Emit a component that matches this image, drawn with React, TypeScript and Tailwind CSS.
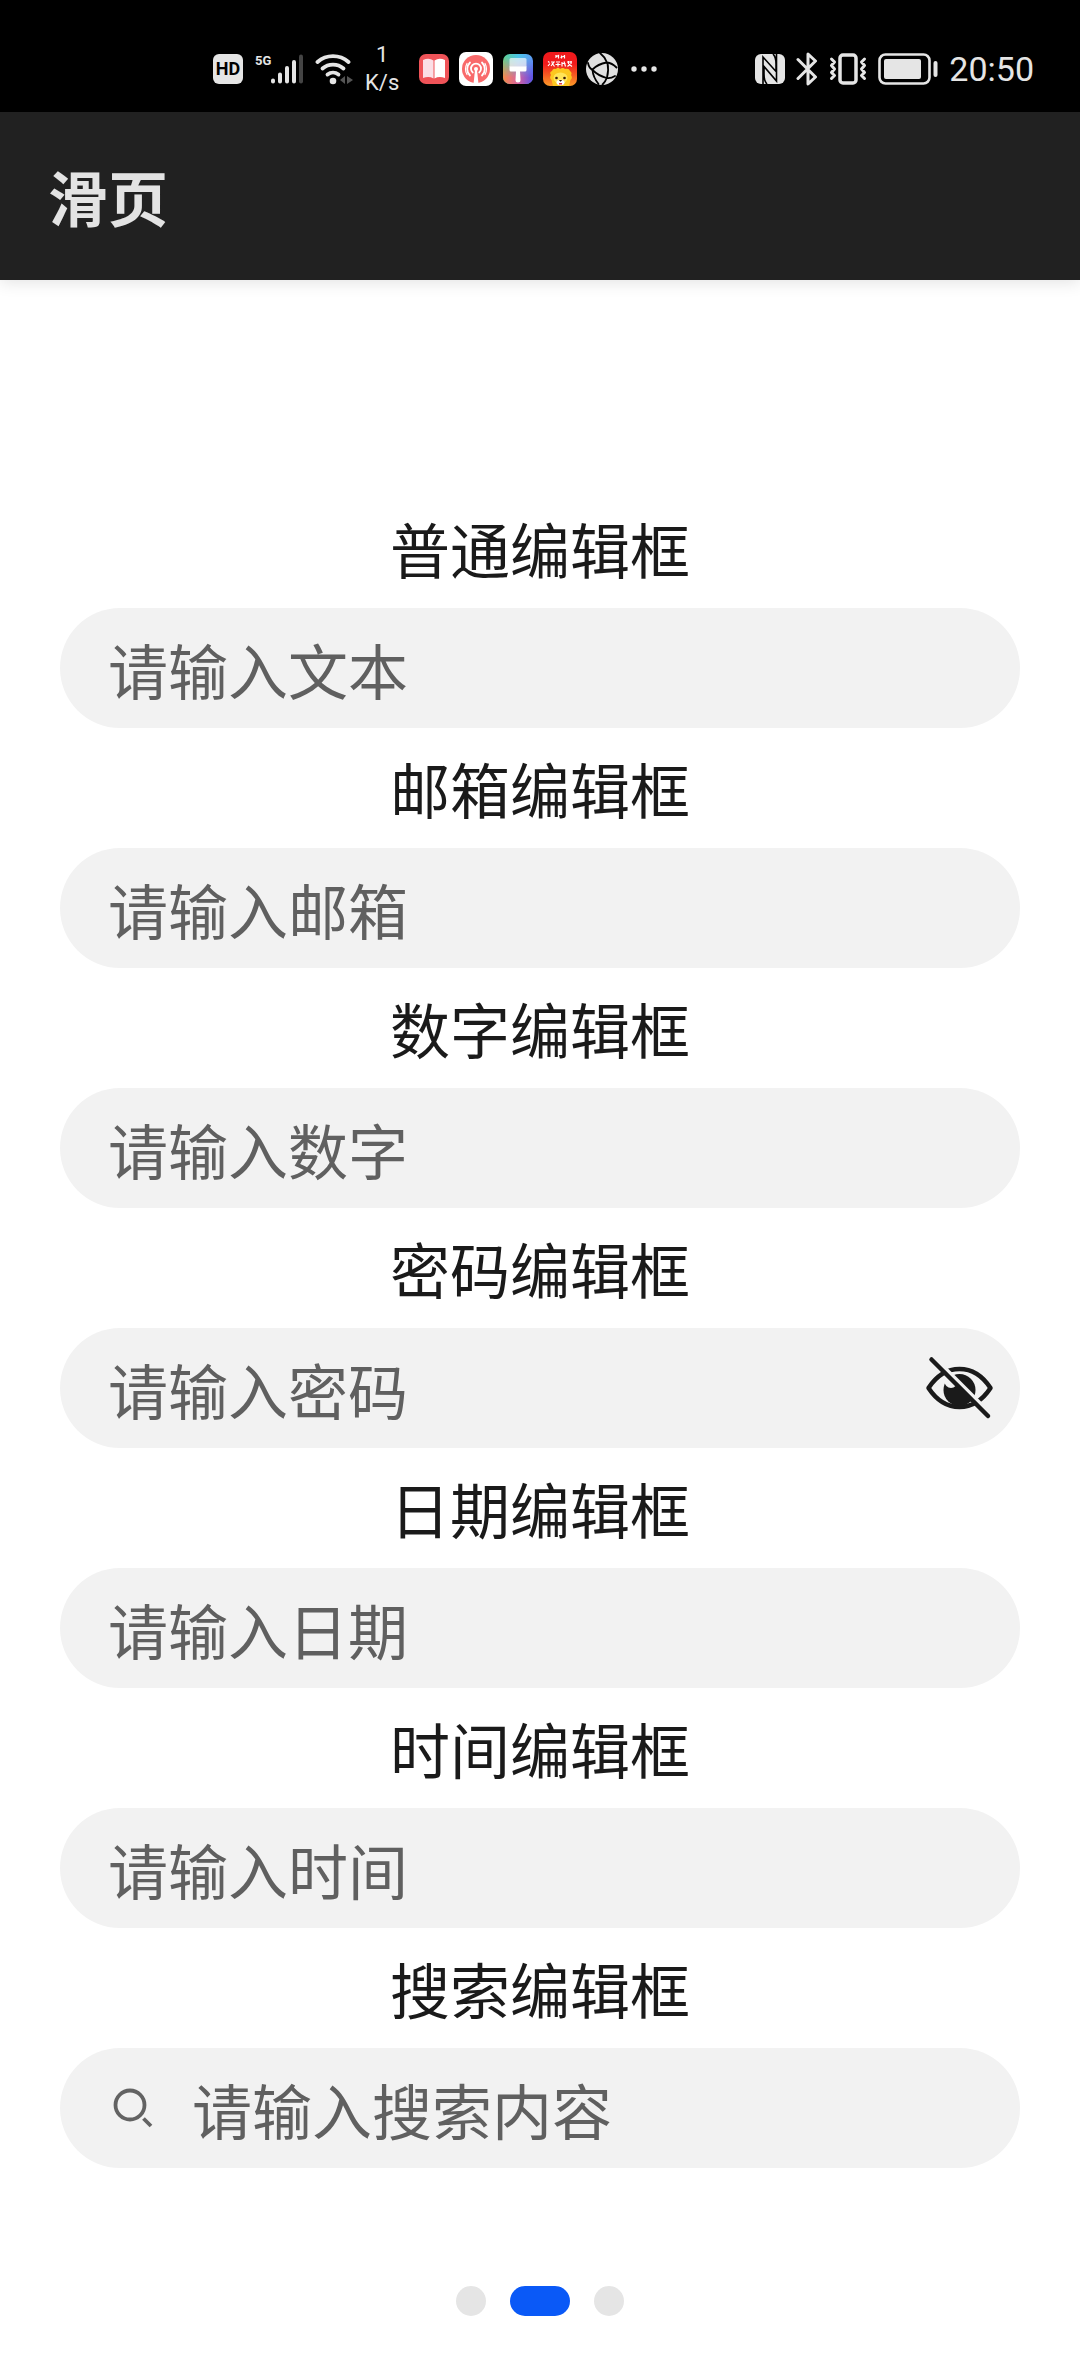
import { useState, type ReactNode } from "react";
import clsx from "clsx";

type Field = {
  id: string;
  type: string;
  label: string;
  placeholder: string;
};

const fields: Field[] = [
  { id: "text", type: "text", label: "普通编辑框", placeholder: "请输入文本" },
  { id: "email", type: "email", label: "邮箱编辑框", placeholder: "请输入邮箱" },
  { id: "number", type: "number", label: "数字编辑框", placeholder: "请输入数字" },
  { id: "password", type: "password", label: "密码编辑框", placeholder: "请输入密码" },
  { id: "date", type: "text", label: "日期编辑框", placeholder: "请输入日期" },
  { id: "time", type: "text", label: "时间编辑框", placeholder: "请输入时间" },
  { id: "search", type: "search", label: "搜索编辑框", placeholder: "请输入搜索内容" },
];

function SignalIcon() {
  return (
    <div className="relative h-8 w-12">
      <span className="absolute top-0 left-0 text-[13px] leading-4 font-bold">5G</span>
      <svg className="size-full" viewBox="0 0 48 32" fill="none" strokeWidth="4" strokeLinecap="round">
        <path d="M18 27.500v1M25 21.500v7M32 15v13.500M39 9v19.500" stroke="#e5e5e5" />
        <path d="M46 3.500v25" stroke="#444" />
      </svg>
    </div>
  );
}

function WifiIcon() {
  return (
    <svg className="h-8 w-[38px]" viewBox="0 0 38 32" fill="none" strokeWidth="3.800" strokeLinecap="round">
      <g stroke="#e5e5e5">
        <path d="M2.500 9A23.500 23.500 0 0 1 33.500 9" />
        <path d="M7.500 15.500A16 16 0 0 1 28.500 15.500" />
        <path d="M12.500 21.500A9 9 0 0 1 23.500 21.500" />
      </g>
      <circle cx="18" cy="28" r="3.300" fill="#e5e5e5" />
      <path d="M30 23v8l-5-4zM32 23v8l6-4z" fill="#555" />
    </svg>
  );
}

function BookApp() {
  return (
    <svg className="size-[34px]" viewBox="0 0 34 34">
      <rect x="2" y="2" width="30" height="30" rx="7" fill="#ef5358" />
      <path d="M6 8q6-2.500 10.500.500v18Q12 24 6 26z" fill="#fbdfe6" />
      <path d="M28 8q-6-2.500-10.500.500v18Q22 24 28 26z" fill="#fff" />
    </svg>
  );
}

function PodcastApp() {
  return (
    <svg className="size-[34px]" viewBox="0 0 34 34" fill="none">
      <rect width="34" height="34" rx="7" fill="#fff" />
      <circle cx="17" cy="17" r="14" fill="#f96a6b" />
      <g stroke="#fff" strokeWidth="1.800" strokeLinecap="round">
        <path d="M13.800 20.500a5 5 0 1 1 6.400 0" />
        <path d="M11 23.500a9 9 0 0 1 0-13M23 23.500a9 9 0 0 0 0-13" />
        <path d="M8 22.500a11.500 11.500 0 0 1 0-11M26 22.500a11.500 11.500 0 0 0 0-11" strokeWidth="1.200" />
      </g>
      <circle cx="17" cy="17" r="2" fill="#fff" />
      <path d="M16 18h2l1.500 14h-5z" fill="#fff" />
    </svg>
  );
}

function BrushApp() {
  return (
    <svg className="size-[34px]" viewBox="0 0 34 34">
      <defs>
        <linearGradient id="theme-top" x1="0" y1="0" x2="1" y2="0">
          <stop offset="0" stopColor="#5fd08f" />
          <stop offset=".5" stopColor="#4cc5e8" />
          <stop offset="1" stopColor="#5c9cf5" />
        </linearGradient>
        <linearGradient id="theme-low" x1="0" y1="0" x2="1" y2="0">
          <stop offset="0" stopColor="#f58a4a" />
          <stop offset=".5" stopColor="#d863a0" />
          <stop offset="1" stopColor="#5a50e8" />
        </linearGradient>
        <linearGradient id="theme-fade" x1="0" y1="0" x2="0" y2="1">
          <stop offset=".15" stopColor="#fff" stopOpacity="0" />
          <stop offset=".75" stopColor="#fff" />
        </linearGradient>
        <mask id="theme-mask">
          <rect width="34" height="34" fill="url(#theme-fade)" />
        </mask>
      </defs>
      <rect x="2" y="2" width="30" height="30" rx="7" fill="url(#theme-top)" />
      <rect x="2" y="2" width="30" height="30" rx="7" fill="url(#theme-low)" mask="url(#theme-mask)" />
      <path d="M10 6h14a1.500 1.500 0 0 1 1.500 1.500V15h-17V7.500A1.500 1.500 0 0 1 10 6z" fill="#fff" opacity=".65" />
      <path d="M8.500 14.500h17V18q0 1.500-1.500 1.500h-5l.500 8.500a2.500 2.500 0 0 1-5 0l.500-8.500h-5Q8.500 19.500 8.500 18z" fill="#fff" />
    </svg>
  );
}

function LionApp() {
  return (
    <svg className="size-[34px]" viewBox="0 0 34 34" fill="none">
      <defs>
        <linearGradient id="lion-bg" x1="0" y1="0" x2="0" y2="1">
          <stop offset=".35" stopColor="#f01a1c" />
          <stop offset="1" stopColor="#fb9a28" />
        </linearGradient>
        <clipPath id="lion-clip">
          <rect width="34" height="34" rx="7" />
        </clipPath>
      </defs>
      <g clipPath="url(#lion-clip)">
        <rect width="34" height="34" fill="url(#lion-bg)" />
        <path d="M13 3v3M12.500 5l3-1.500V6.500M18.500 3.500v3M17.500 5.500l4-1.500M21.500 3v3.500" stroke="#fff" strokeWidth="1.200" />
        <path
          d="M5 9.500l1.500 1M5 14l2-2.500M8 10h3l-3 4M9 11l2.500 3.500M13 10h4M15 11v3.500M12.500 12.500h5M19 10v4.500M18.500 11.500h4M21 9.500l1.500 5M24 10h5M25.500 9v3M28 9v3M24.500 14.500l2-2 2.500 2"
          stroke="#fff"
          strokeWidth="1.200"
        />
        <path
          d="M8 23q-2-3 1-4 1-3 4-2 2-2.500 4 0 3-2 5 0 4-1 5 2 2.500 2 1 4 2 3-.500 5L26 34H10l-1.500-6Q6 26 8 23z"
          fill="#fcc71f"
        />
        <ellipse cx="17.500" cy="26" rx="7" ry="5.500" fill="#ffe458" />
        <ellipse cx="17.500" cy="30.500" rx="4" ry="2.800" fill="#fff" />
        <circle cx="13.500" cy="26" r="1.300" fill="#3a1a08" />
        <circle cx="21.500" cy="26" r="1.300" fill="#3a1a08" />
        <path d="M15.800 28h3.400l-1.700 1.800z" fill="#3a1a08" />
        <path d="M16 31h3v1.500h-3z" fill="#e3373a" />
      </g>
    </svg>
  );
}

function GlobeApp() {
  return (
    <svg className="size-[34px]" viewBox="0 0 34 34" fill="none">
      <circle cx="17" cy="17" r="16" fill="#e0e0e0" />
      <g stroke="#000" strokeWidth="1.800" strokeLinecap="round">
        <path d="M7.500 17.500Q13 12 21.500 10.500M22.500 11Q24 18 22 25.500M7.500 18Q13 23.500 21.500 26" />
        <path d="M15 1q4.500 3.500 7 9.500 5 .500 9.500 5M3 11q1 5 4.500 7 .500 7 6 14M22 26q4 .500 8-2M21.500 26.500q-1 3-4 6" />
      </g>
    </svg>
  );
}

function MoreIcon() {
  return (
    <svg className="size-[34px]" viewBox="0 0 34 34" fill="#e5e5e5">
      <circle cx="7" cy="17" r="2.700" />
      <circle cx="17" cy="17" r="2.700" />
      <circle cx="27" cy="17" r="2.700" />
    </svg>
  );
}

function NfcIcon() {
  return (
    <svg className="size-[30px]" viewBox="0 0 30 30" fill="none">
      <rect width="30" height="30" rx="6" fill="#e5e5e5" />
      <path d="M8 30V3l13 14.500V10q0-7-3-10M21.500 0V27L9 12.500V20q0 7 3 10" stroke="#000" strokeWidth="1.600" />
    </svg>
  );
}

function BluetoothIcon() {
  return (
    <svg className="h-[34px] w-[22px]" viewBox="0 0 22 34" fill="none" stroke="#e5e5e5" strokeWidth="3" strokeLinecap="round" strokeLinejoin="round">
      <path d="M2 7.500L19.500 25 12 32V2l7.500 7L2 26.500" />
    </svg>
  );
}

function VibrateIcon() {
  return (
    <svg className="h-8 w-[38px]" viewBox="0 0 38 32" fill="none" stroke="#e5e5e5" strokeWidth="3" strokeLinecap="round" strokeLinejoin="round">
      <rect x="11" y="2" width="16" height="28" rx="3" strokeWidth="3.500" />
      <path d="M2.500 6l3 3-3 3.500 3 3.500-3 3.500 3 3-3 3M35.500 6l-3 3 3 3.500-3 3.500 3 3.500-3 3 3 3" />
    </svg>
  );
}

function BatteryIcon() {
  return (
    <svg className="h-8 w-[60px]" viewBox="0 0 60 32" fill="none">
      <rect x="1.500" y="1.500" width="50" height="29" rx="6" stroke="#e5e5e5" strokeWidth="2.600" />
      <rect x="6" y="6" width="37" height="20" rx="2" fill="#e5e5e5" />
      <rect x="55.500" y="8" width="4" height="16" rx="2" fill="#e5e5e5" />
    </svg>
  );
}

function StatusBar() {
  return (
    <div className="flex h-28 items-center justify-between bg-black pt-[26px] pr-[46px] pl-[213px] font-['Roboto',sans-serif] text-[#e5e5e5]">
      <div className="flex items-center gap-[18px]">
        <div className="flex items-center gap-3">
          <span className="flex size-[30px] items-center justify-center rounded-md bg-[#e5e5e5] text-[18px] leading-none font-bold text-black">
            HD
          </span>
          <SignalIcon />
          <WifiIcon />
          <span className="text-center text-[22px] leading-7">
            1<br />
            K/s
          </span>
        </div>
        <div className="flex items-center gap-2">
          <BookApp />
          <PodcastApp />
          <BrushApp />
          <LionApp />
          <GlobeApp />
          <MoreIcon />
        </div>
      </div>
      <div className="flex items-center gap-[11px]">
        <NfcIcon />
        <BluetoothIcon />
        <VibrateIcon />
        <BatteryIcon />
        <span className="text-[34px] leading-10">20:50</span>
      </div>
    </div>
  );
}

function EyeOffIcon() {
  return (
    <svg className="size-[72px]" viewBox="0 0 72 72" fill="none" strokeLinecap="round">
      <path d="M4.500 36Q17 17 35.500 17T66.500 36Q54 55 35.500 55T4.500 36z" stroke="#1a1a1a" strokeWidth="4.500" strokeLinejoin="round" />
      <circle cx="35.500" cy="38" r="16" fill="#1a1a1a" />
      <circle cx="27" cy="29.500" r="6.500" fill="#f2f2f2" />
      <path d="M15 10l50 50" stroke="#f2f2f2" strokeWidth="3.500" strokeLinecap="butt" />
      <path d="M7.500 7.500L64 64" stroke="#1a1a1a" strokeWidth="4.500" />
    </svg>
  );
}

function SearchIcon() {
  return (
    <svg className="mr-9 size-12 shrink-0" viewBox="0 0 48 48" fill="none" stroke="#636363" strokeWidth="3.800">
      <circle cx="22" cy="21" r="14.500" />
      <path d="M35.500 34.500l7.500 7.500" />
    </svg>
  );
}

function EditBox({ field }: { field: Field }) {
  const [visible, setVisible] = useState(false);
  const isPassword = field.type === "password";
  let trailing: ReactNode = null;

  if (isPassword) {
    trailing = (
      <button type="button" aria-label="显示密码" className="shrink-0" onClick={() => setVisible(!visible)}>
        <EyeOffIcon />
      </button>
    );
  }

  return (
    <div>
      <label htmlFor={field.id} className="flex h-[120px] items-center justify-center text-[#1a1a1a]">
        {field.label}
      </label>
      <div className="flex h-[120px] items-center rounded-full bg-[#f2f2f2] pr-6 pl-12">
        {field.type === "search" && <SearchIcon />}
        <input
          id={field.id}
          type={isPassword && visible ? "text" : field.type}
          placeholder={field.placeholder}
          className="h-full min-w-0 flex-1 appearance-none bg-transparent outline-none placeholder:text-[#606060] placeholder:opacity-100"
        />
        {trailing}
      </div>
    </div>
  );
}

export default function App() {
  const [page, setPage] = useState(1);

  return (
    <div className="flex min-h-screen flex-col bg-white font-['Noto_Sans_CJK_SC',sans-serif] text-[60px] leading-[90px]">
      <StatusBar />
      <header className="flex h-[168px] items-center bg-[#212121] px-12 shadow-[0_2px_16px_rgba(0,0,0,0.12)]">
        <h1 className="font-bold text-[#e3e3e3]">滑页</h1>
      </header>
      <main className="px-[60px] pt-52">
        {fields.map((field) => (
          <EditBox key={field.id} field={field} />
        ))}
      </main>
      <nav className="mt-auto flex justify-center gap-6 pb-15">
        {[0, 1, 2].map((i) => (
          <button
            key={i}
            type="button"
            aria-label={`${i + 1}`}
            onClick={() => setPage(i)}
            className={clsx("h-[30px] rounded-full", i === page ? "w-[60px] bg-[#0a59f7]" : "w-[30px] bg-[#e5e5e5]")}
          />
        ))}
      </nav>
    </div>
  );
}
